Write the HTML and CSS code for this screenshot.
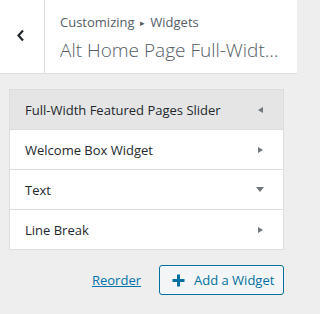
FILE: index.html
```html
<!DOCTYPE html>
<html lang="en">
<head>
<meta charset="utf-8">
<title>Widgets</title>
<link rel="stylesheet" href="styles.css">
</head>
<body>
<div class="header">
  <div class="back">
    <svg width="9" height="13" viewBox="0 0 9 13"><path d="M7 1.5 L2.5 6.5 L7 11.5" fill="none" stroke="#23282d" stroke-width="2.2"/></svg>
  </div>
  <div class="titles">
    <div class="crumb">Customizing <span class="sep">&#9656;</span> Widgets</div>
    <div class="title">Alt Home Page Full-Widt&hellip;</div>
  </div>
</div>
<div class="main">
  <ul class="widgets">
    <li class="widget active"><span class="name">Full-Width Featured Pages Slider</span><span class="arrow left"></span></li>
    <li class="widget"><span class="name">Welcome Box Widget</span><span class="arrow right"></span></li>
    <li class="widget"><span class="name">Text</span><span class="arrow down"></span></li>
    <li class="widget"><span class="name">Line Break</span><span class="arrow right"></span></li>
  </ul>
  <div class="actions">
    <a class="reorder" href="#">Reorder</a>
    <button class="add"><svg width="13" height="13" viewBox="0 0 13 13"><path d="M6.5 0.5 V12.5 M0.5 6.5 H12.5" stroke="#0071a1" stroke-width="3"/></svg><span>Add a Widget</span></button>
  </div>
</div>
</body>
</html>
```
FILE: styles.css
```css
html, body {
  margin: 0;
  padding: 0;
  overflow: hidden;
}
body {
  background: #eeeeee;
  font-family: "Open Sans", "Noto Sans", "Liberation Sans", sans-serif;
  color: #23282d;
  width: 297px;
  height: 314px;
}
.header {
  display: flex;
  height: 73px;
  background: #ffffff;
  border-bottom: 1px solid #dddddd;
}
.back {
  width: 44px;
  flex: none;
  border-right: 1px solid #dddddd;
  display: flex;
  align-items: center;
  justify-content: center;
}
.back svg {
  margin-left: -4px;
  margin-top: -2px;
}
.titles {
  padding: 13px 0 0 15px;
  min-width: 0;
  flex: 1;
  overflow: hidden;
}
.crumb {
  font-size: 13px;
  line-height: 18px;
  color: #555d66;
}
.sep {
  font-size: 9px;
  position: relative;
  top: -1px;
  margin: 0 2px;
}
.title {
  font-size: 19px;
  font-weight: 300;
  line-height: 26px;
  margin-top: 4px;
  color: #555d66;
  white-space: nowrap;
  overflow: hidden;
}
.main {
  padding: 15px 13px 0 9px;
}
.widgets {
  list-style: none;
  margin: 0;
  padding: 0;
  background: #ffffff;
  border: 1px solid #dddddd;
}
.widget {
  display: flex;
  align-items: center;
  justify-content: space-between;
  height: 39px;
  padding: 0 20px 0 15px;
  border-top: 1px solid #dddddd;
  font-size: 13px;
}
.widget:first-child {
  border-top: 0;
}
.widget.active {
  background: #e5e5e5;
}
.name {
  font-weight: 500;
}
.arrow {
  width: 0;
  height: 0;
  border-style: solid;
  border-color: transparent;
}
.arrow.left {
  border-width: 3.5px 5px 3.5px 0;
  border-right-color: #72777c;
}
.arrow.right {
  border-width: 3.5px 0 3.5px 5px;
  border-left-color: #72777c;
}
.arrow.down {
  border-width: 5px 4px 0 4px;
  border-top-color: #72777c;
  margin-right: -1px;
}
.actions {
  display: flex;
  justify-content: flex-end;
  align-items: center;
  gap: 18px;
  margin-top: 15px;
}
.reorder {
  font-size: 13px;
  color: #0073aa;
  text-decoration: underline;
}
.add {
  display: flex;
  align-items: center;
  gap: 9px;
  height: 30px;
  width: 125px;
  padding: 0 0 0 12px;
  border: 1px solid #0071a1;
  border-radius: 3px;
  background: #f3f5f6;
  color: #0071a1;
  font-family: inherit;
  font-size: 13px;
  cursor: pointer;
}
```
